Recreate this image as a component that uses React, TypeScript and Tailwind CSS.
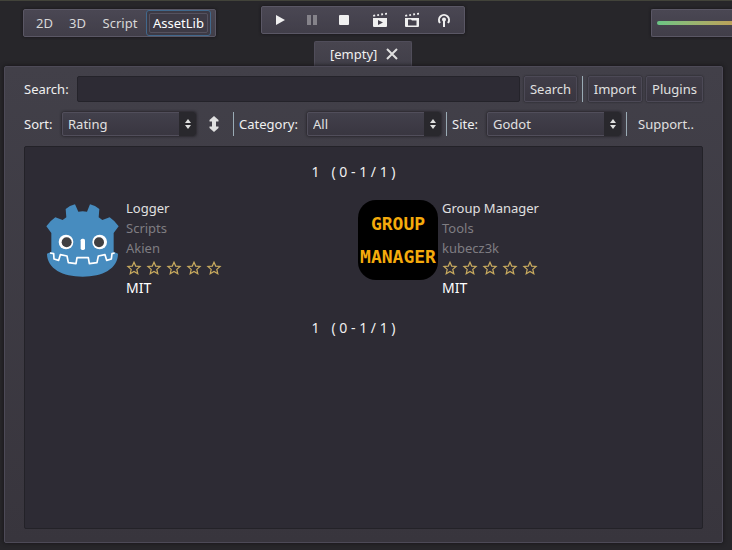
import { useState, type ReactNode } from "react";
import clsx from "clsx";

const bar =
  "flex h-7 items-center rounded-xs border border-[#5a5765] bg-linear-to-b from-[#4a4753] to-[#413e49] shadow-[0_0_3px_#141316]";
const raised =
  "rounded-xs border border-[#4c4956] bg-linear-to-b from-[#403d48] to-[#393640] text-[#e0e0e0] shadow-[0_0_2px_#1c1b20]";

const modes = [
  { name: "2D", width: "w-[33px]" },
  { name: "3D", width: "w-[33px]" },
  { name: "Script", width: "w-[52px]" },
  { name: "AssetLib", width: "w-[65px]" },
];

function Separator() {
  return (
    <div className="flex w-[3px] shrink-0 justify-center self-stretch">
      <div className="w-px bg-[#9aabb5]" />
    </div>
  );
}

function PlayButton({ label, children }: { label: string; children: ReactNode }) {
  return (
    <button type="button" aria-label={label} className="flex h-full w-8 shrink-0 items-center justify-center">
      <svg viewBox="0 0 16 16" className="size-4" fill="#f0f0f0">
        {children}
      </svg>
    </button>
  );
}

function Clapper() {
  return (
    <path d="M1 3l2-.5.4 1.700-2 .5zM5 2.400l1.800-.4.4 1.700-1.800.4zM9 1.600l1.800-.3.4 1.700-1.800.4zM13 1l2-.3v1.900l-1.700.4z" />
  );
}

function Choice({ id, label, labelWidth, options }: { id: string; label: string; labelWidth: string; options: string[] }) {
  return (
    <>
      <label htmlFor={id} className={clsx("shrink-0 whitespace-nowrap", labelWidth)}>
        {label}
      </label>
      <div className="relative h-6 w-[134px] shrink-0">
        <select
          id={id}
          className="h-full w-full appearance-none rounded-xs border border-[#514e5b] bg-linear-to-b from-[#42404b] to-[#393640] pl-[5px] text-[#e0e0e0] shadow-[0_0_3px_#141316] outline-none"
        >
          {options.map((o) => (
            <option key={o}>{o}</option>
          ))}
        </select>
        <div className="pointer-events-none absolute inset-y-0 right-0 flex w-[17px] items-center justify-center rounded-r-xs bg-[#29282d]">
          <svg viewBox="0 0 8 12" className="h-3 w-2" fill="#e0e0e0">
            <path d="M4 1l3 4H1zM1 7h6l-3 4z" />
          </svg>
        </div>
      </div>
    </>
  );
}

function Pages() {
  return (
    <div className="flex h-5 items-center justify-center gap-3 pr-5 text-[14px]">
      <span>1</span>
      <span className="whitespace-pre">( 0 - 1 / 1 )</span>
    </div>
  );
}

function Stars() {
  return (
    <div className="flex h-5 items-center gap-1" role="img" aria-label="0 of 5 stars">
      {[1, 2, 3, 4, 5].map((n) => (
        <svg key={n} viewBox="0 0 16 16" className="size-4" fill="none" stroke="#c9ab5f" strokeWidth="1.2">
          <path d="M8 2.2l1.7 3.9 4.4.4-3.3 2.9 1 4.400L8 11.500l-3.800 2.300 1-4.400L1.900 6.500l4.400-.4z" />
        </svg>
      ))}
    </div>
  );
}

function Robot() {
  return (
    <svg viewBox="66 30 240 240" className="size-20 shrink-0">
      <path
        fill="#478cbf"
        d="M137 57Q149 47 165 43L175 65Q188 63 201 65L210 43Q226 47 238 57L236 82L247 90L269 82Q285 93 296 109L281 129V185L294 191C294 236 248 260 188 260S81 236 81 191L94 185V129L79 109Q90 93 106 82L128 90L139 82Z"
      />
      <path
        fill="none"
        stroke="#fff"
        strokeWidth="5"
        strokeLinejoin="round"
        d="M90 189L101 191L102 207L116 211L121 194L141 198L145 218L168 221L171 203H205L208 221L231 218L235 198L255 194L260 211L274 207L276 191L284 189"
      />
      <circle cx="138" cy="156" r="22" fill="#fff" />
      <circle cx="239" cy="156" r="22" fill="#fff" />
      <circle cx="140" cy="157" r="15" fill="#414042" />
      <circle cx="237" cy="157" r="15" fill="#414042" />
      <rect x="182" y="146" width="13" height="34" rx="5" fill="#fff" />
    </svg>
  );
}

function GroupIcon() {
  return (
    <div className="flex size-20 shrink-0 flex-col items-center justify-center rounded-[18px] bg-black font-['DejaVu_Sans_Mono',monospace] text-[18px] leading-[33px] font-bold text-[#f5ab0c]">
      <span>GROUP</span>
      <span>MANAGER</span>
    </div>
  );
}

function Asset({ icon, title, category, author }: { icon: ReactNode; title: string; category: string; author: string }) {
  return (
    <article className="flex gap-1">
      <div className="pt-[2px]">{icon}</div>
      <div className="flex flex-col items-start leading-5">
        <button type="button" className="text-[#e0e0e0]">{title}</button>
        <button type="button" className="text-[#7f7d82]">{category}</button>
        <button type="button" className="text-[#7f7d82]">{author}</button>
        <Stars />
        <span className="text-[14px] text-white">MIT</span>
      </div>
    </article>
  );
}

export default function App() {
  const [mode, setMode] = useState("AssetLib");

  return (
    <div className="flex min-h-screen flex-col overflow-hidden border-t border-[#42433a] bg-[#27262a] font-['Noto_Sans',sans-serif] text-[13px] leading-5 text-[#f0f0f0]">
      <header className="flex h-10 items-start pt-[5px] pl-[23px]">
        <nav className={clsx(bar, "mt-[3px] w-[193px] shrink-0 justify-end pr-1")}>
          {modes.map((m) => (
            <button
              key={m.name}
              type="button"
              onClick={() => setMode(m.name)}
              className={clsx(
                "flex h-[26px] shrink-0 items-center justify-center rounded-[3px] border",
                m.width,
                m.name === mode
                  ? "border-[#41688c] bg-[#3d3a45] p-[2px] text-white"
                  : "border-transparent text-[#d8d8d8]",
              )}
            >
              {m.name === mode ? (
                <span className="flex h-5 w-full items-center justify-center rounded-xs border border-[#55525f]">
                  {m.name}
                </span>
              ) : (
                m.name
              )}
            </button>
          ))}
        </nav>
        <div className={clsx(bar, "ml-[45px] w-[204px] shrink-0 pl-[2px]")}>
          <PlayButton label="Play">
            <path d="M4 3l9 5-9 5z" />
          </PlayButton>
          <PlayButton label="Pause">
            <path fill="#85838a" d="M3 3h4v10H3zM9 3h4v10H9z" />
          </PlayButton>
          <PlayButton label="Stop">
            <rect x="3" y="3" width="10" height="10" rx="1" />
          </PlayButton>
          <div className="ml-1 flex h-full">
            <PlayButton label="Play scene">
              <Clapper />
              <path fillRule="evenodd" d="M1 6h14v8q0 1-1 1H2q-1 0-1-1zM6 8v5l5-2.500z" />
            </PlayButton>
            <PlayButton label="Play custom scene">
              <Clapper />
              <path fillRule="evenodd" d="M1 6h14v8q0 1-1 1H2q-1 0-1-1zM4 7.500v6h8.500v-5H8l-1-1z" />
            </PlayButton>
            <PlayButton label="Deploy">
              <path fill="none" stroke="#f0f0f0" strokeWidth="2" d="M4 11A5 5 0 1 1 12 11M8 7v8" />
              <circle cx="8" cy="7.500" r="2" />
            </PlayButton>
          </div>
        </div>
        <div className={clsx(bar, "mt-[3px] ml-auto w-[81px] shrink-0 rounded-r-none border-r-0 pl-[5px]")}>
          <div className="h-1 w-full rounded-l-xs bg-linear-to-r from-[#69c585] to-[#bba159]" />
        </div>
      </header>

      <main className="flex flex-1 flex-col pr-[9px] pb-[7px] pl-1">
        <div className="ml-[310px] flex h-[25px] w-[98px] items-center justify-between rounded-t-xs border border-b-0 border-[#504d5a] bg-linear-to-b from-[#48454f] to-[#413f49] pr-[13px] pl-[15px]">
          <span>[empty]</span>
          <button type="button" aria-label="Close tab">
            <svg viewBox="0 0 12 12" className="size-3" fill="none" stroke="#e0e0e0" strokeWidth="2">
              <path d="M1 1l10 10M11 1L1 11" />
            </svg>
          </button>
        </div>

        <section className="flex flex-1 flex-col gap-[10px] rounded-xs border border-[#4d4a57] bg-linear-to-b from-[#424049] to-[#38353d] px-[19px] pt-[9px] pb-[13px] shadow-[0_0_4px_#141316]">
          <div className="flex h-[26px] items-center gap-1">
            <label htmlFor="search" className="w-[49px] shrink-0">Search:</label>
            <input
              id="search"
              type="text"
              className="h-full min-w-0 flex-1 rounded-xs border border-[#24232a] bg-[#2d2b34] px-1 outline-none"
            />
            <button type="button" className={clsx(raised, "h-full w-[53px] shrink-0")}>Search</button>
            <Separator />
            <button type="button" className={clsx(raised, "h-full w-[54px] shrink-0")}>Import</button>
            <button type="button" className={clsx(raised, "h-full w-[57px] shrink-0")}>Plugins</button>
          </div>

          <div className="flex h-6 items-center gap-1">
            <Choice id="sort" label="Sort:" labelWidth="w-[34px]" options={["Rating"]} />
            <button type="button" aria-label="Reverse order" className="flex h-full w-7 shrink-0 items-center justify-center">
              <svg viewBox="0 0 16 16" className="size-4" fill="#e0e0e0">
                <path d="M8 0l4.500 4v1.500H10v5h2.500V12L8 16l-4.500-4v-1.500H6v-5H3.500V4z" />
              </svg>
            </button>
            <Separator />
            <Choice id="category" label="Category:" labelWidth="w-16" options={["All"]} />
            <Separator />
            <Choice id="site" label="Site:" labelWidth="w-[31px]" options={["Godot"]} />
            <Separator />
            <button type="button" className="h-full px-[6px] text-[#e0e0e0]">Support..</button>
          </div>

          <div className="flex-1 rounded-xs border border-[#232228] bg-[#2d2b34] pt-[15px]">
            <Pages />
            <div className="grid grid-cols-2 pt-4 pr-7 pb-5 pl-[17px]">
              <Asset icon={<Robot />} title="Logger" category="Scripts" author="Akien" />
              <Asset icon={<GroupIcon />} title="Group Manager" category="Tools" author="kubecz3k" />
            </div>
            <Pages />
          </div>
        </section>
      </main>
    </div>
  );
}
